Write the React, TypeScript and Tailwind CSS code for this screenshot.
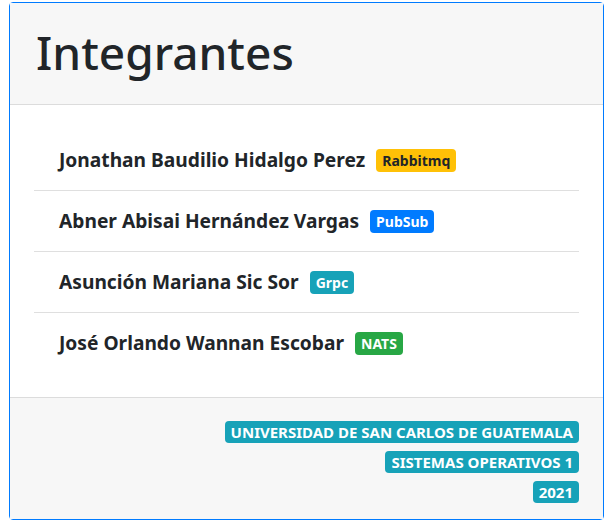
const members = [
  { name: 'Jonathan Baudilio Hidalgo Perez', tag: 'Rabbitmq', color: 'bg-[#ffc107] text-[#212529]' },
  { name: 'Abner Abisai Hernández Vargas', tag: 'PubSub', color: 'bg-[#007bff] text-white' },
  { name: 'Asunción Mariana Sic Sor', tag: 'Grpc', color: 'bg-[#17a2b8] text-white' },
  { name: 'José Orlando Wannan Escobar', tag: 'NATS', color: 'bg-[#28a745] text-white' },
];

const footer = ['UNIVERSIDAD DE SAN CARLOS DE GUATEMALA', 'SISTEMAS OPERATIVOS 1', '2021'];

export default function App() {
  return (
    <div className="min-h-[520px] bg-white pt-[2px] pl-[9px] font-['Noto_Sans',sans-serif] text-[#212529]">
      <div className="w-[595px] rounded-[4px] border border-[#007bff] bg-white">
        {/* header */}
        <div className="flex h-[102px] items-center border-b border-[#dcdcdc] bg-[#f7f7f7] px-[26px]">
          <h1 className="mt-[-4px] text-[46px] font-medium leading-none">Integrantes</h1>
        </div>

        {/* body */}
        <div className="px-[24px] pt-[25px] pb-[23px]">
          <ul>
            {members.map((m, i) => (
              <li
                key={m.tag}
                className={`flex h-[61px] items-center px-[25px] ${i < members.length - 1 ? 'border-b border-[#dfdfdf]' : ''}`}
              >
                <span className="text-[19.2px] font-bold">{m.name}</span>
                <span className={`ml-[11px] rounded-[4px] px-[6px] py-[2px] text-[14px] font-bold leading-[19px] ${m.color}`}>
                  {m.tag}
                </span>
              </li>
            ))}
          </ul>
        </div>

        {/* footer */}
        <div className="flex flex-col items-end gap-[8px] border-t border-[#dcdcdc] bg-[#f7f7f7] px-[24px] pt-[23px] pb-[16px]">
          {footer.map((f) => (
            <span key={f} className="rounded-[4px] bg-[#17a2b8] px-[6px] py-[2px] text-[15px] font-bold leading-[18px] text-white">
              {f}
            </span>
          ))}
        </div>
      </div>
    </div>
  );
}
